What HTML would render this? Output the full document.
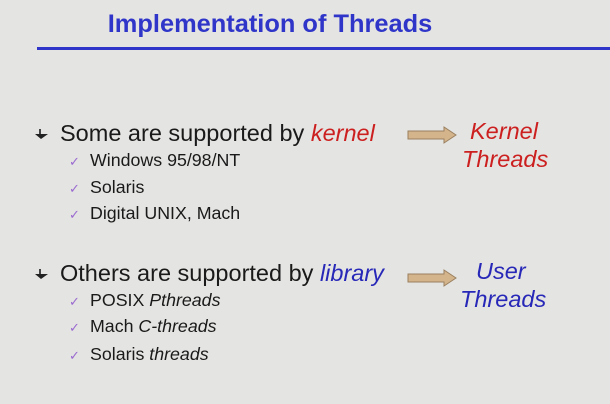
<!DOCTYPE html>
<html><head><style>
body{margin:0;width:610px;height:404px;background:#e4e4e2;position:relative;overflow:hidden;font-family:"Liberation Sans",sans-serif;color:#1a1a1a}
.a{position:absolute;white-space:nowrap;line-height:1}
.t{font-family:"Liberation Sans",sans-serif;font-weight:bold;color:#2f35c8;font-size:25.4px;left:0;width:540px;text-align:center;top:12px}
.m{font-size:23.5px;left:60px}
.s{font-size:17.8px;left:90px}
.ck{position:absolute;font-size:13px;color:#9a6ad0;left:69px}
.b{position:absolute;left:32px;width:0;height:0}
.r{color:#cc2020;font-style:italic}
.bl{color:#2828b8;font-style:italic}
i{font-style:italic}
</style></head><body>
<div class="a t">Implementation of Threads</div>
<div style="position:absolute;left:37px;top:47px;width:573px;height:3px;background:#2f35c8"></div>

<svg class="b" style="top:126px;width:18px;height:16px" viewBox="0 0 18 16"><path d="M8 3V8" stroke="#444" stroke-width="2"/><path d="M3 8L16 8L9 13Z" fill="#222"/></svg>
<div class="a m" style="top:122px">Some are supported by <span class="r">kernel</span></div>
<div class="ck" style="top:154px">✓</div><div class="a s" style="top:152px">Windows 95/98/NT</div>
<div class="ck" style="top:181px">✓</div><div class="a s" style="top:179px">Solaris</div>
<div class="ck" style="top:207px">✓</div><div class="a s" style="top:205px">Digital UNIX, Mach</div>

<svg class="b" style="top:266px;width:18px;height:16px" viewBox="0 0 18 16"><path d="M8 3V8" stroke="#444" stroke-width="2"/><path d="M3 8L16 8L9 13Z" fill="#222"/></svg>
<div class="a m" style="top:262px">Others are supported by <span class="bl">library</span></div>
<div class="ck" style="top:294px">✓</div><div class="a s" style="top:292px">POSIX <i>Pthreads</i></div>
<div class="ck" style="top:320px">✓</div><div class="a s" style="top:318px">Mach <i>C-threads</i></div>
<div class="ck" style="top:348px">✓</div><div class="a s" style="top:346px">Solaris <i>threads</i></div>

<svg style="position:absolute;left:406px;top:125px" width="52" height="20"><path d="M2 6H38V2L50 10L38 18V14H2Z" fill="#d4b48a" stroke="#9a8060" stroke-width="1"/></svg>
<svg style="position:absolute;left:406px;top:268px" width="52" height="20"><path d="M2 6H38V2L50 10L38 18V14H2Z" fill="#d4b48a" stroke="#9a8060" stroke-width="1"/></svg>

<div class="a r" style="font-size:23.5px;left:470px;top:120px">Kernel</div>
<div class="a r" style="font-size:23.5px;left:462px;top:148px">Threads</div>
<div class="a bl" style="font-size:23.5px;left:476px;top:260px">User</div>
<div class="a bl" style="font-size:23.5px;left:460px;top:288px">Threads</div>
</body></html>
